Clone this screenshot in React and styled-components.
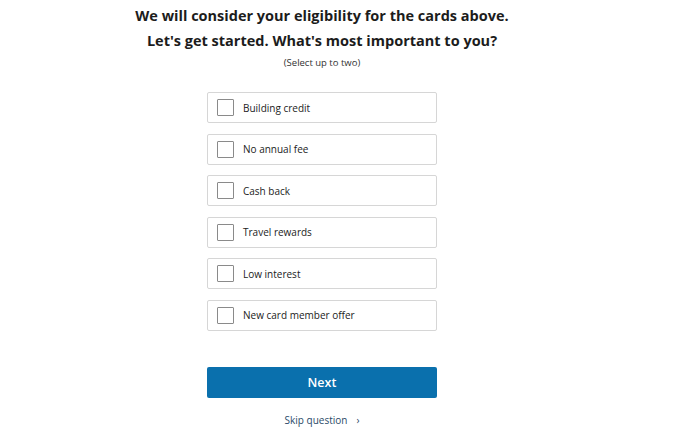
import React from "react";
import styled, { createGlobalStyle } from "styled-components";

const Global = createGlobalStyle`
  html, body { margin: 0; padding: 0; background: #fff; }
  body { font-family: "Open Sans", "Noto Sans", sans-serif; color: #1a1a1a; }
`;

const Page = styled.div`
  width: 644px;
  display: flex;
  flex-direction: column;
  align-items: center;
  padding-top: 3px;
`;

const Title = styled.h1`
  margin: 0;
  font-size: 14.5px;
  font-weight: 700;
  line-height: 25px;
  text-align: center;
  color: #1c1c1c;
`;

const Sub = styled.p`
  margin: 3px 0 0;
  font-size: 9.5px;
  line-height: 14px;
  color: #333;
`;

const List = styled.div`
  margin-top: 22px;
  width: 230px;
  display: flex;
  flex-direction: column;
  gap: 10.5px;
`;

const Option = styled.label`
  box-sizing: border-box;
  height: 31px;
  border: 1px solid #d6d6d6;
  border-radius: 2px;
  display: flex;
  align-items: center;
  padding-left: 9px;
  gap: 9px;
  font-size: 10px;
  color: #222;
  cursor: pointer;
`;

const Box = styled.span`
  box-sizing: border-box;
  width: 17px;
  height: 17px;
  border: 1px solid #8a8a8a;
  border-radius: 1px;
  background: #fff;
`;

const NextButton = styled.button`
  margin-top: 36px;
  width: 230px;
  height: 31px;
  border: none;
  border-radius: 2px;
  background: #0a70ad;
  color: #fff;
  font-family: inherit;
  font-size: 12.5px;
  font-weight: 600;
`;

const Skip = styled.a`
  margin-top: 15px;
  font-size: 10px;
  color: #2b4a68;
  display: flex;
  align-items: center;
  gap: 9px;
`;

const options = [
  "Building credit",
  "No annual fee",
  "Cash back",
  "Travel rewards",
  "Low interest",
  "New card member offer",
];

export default function App() {
  return (
    <>
      <Global />
      <Page>
        <Title>
          We will consider your eligibility for the cards above.
          <br />
          Let's get started. What's most important to you?
        </Title>
        <Sub>(Select up to two)</Sub>
        <List>
          {options.map((o) => (
            <Option key={o}>
              <Box />
              {o}
            </Option>
          ))}
        </List>
        <NextButton>Next</NextButton>
        <Skip>
          Skip question <span>›</span>
        </Skip>
      </Page>
    </>
  );
}
